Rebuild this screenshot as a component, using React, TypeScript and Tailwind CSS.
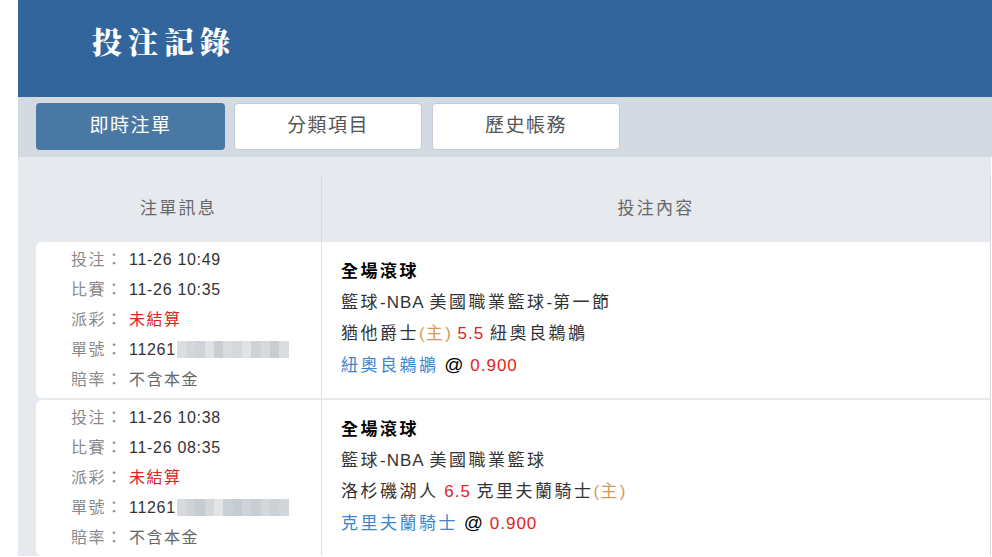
import React from "react";

const FONT = { fontFamily: '"Liberation Sans", "Noto Sans CJK TC", sans-serif' };

function T({ text, cjk }: { text: string; cjk: string }) {
  const parts = text.split(/([\u3000-\u9fff\uff00-\uffef]+)/).filter((p) => p.length > 0);
  return (
    <>
      {parts.map((p, i) =>
        /[\u3000-\u9fff\uff00-\uffef]/.test(p) ? (
          <span key={i} className={cjk}>
            {p}
          </span>
        ) : (
          <span key={i}>{p}</span>
        )
      )}
    </>
  );
}

function Blur({ shades }: { shades: string[] }) {
  return (
    <span className="inline-flex h-[17px] w-[112px] align-middle ml-[1px] -mt-[2px] overflow-hidden">
      {shades.map((c, i) => (
        <span key={i} className="h-full flex-1" style={{ backgroundColor: c }} />
      ))}
    </span>
  );
}

function InfoLine({ label, children }: { label: string; children: React.ReactNode }) {
  return (
    <div className="flex items-center whitespace-nowrap">
      <span className="inline-block w-[58px] text-[#8a8a8a] tracking-[1.5px]">{label}：</span>
      {children}
    </div>
  );
}

function Num({ children, className = "" }: { children: React.ReactNode; className?: string }) {
  return <span className={`tracking-[0.7px] ${className}`}>{children}</span>;
}

type Row = {
  bet: string;
  match: string;
  shades: string[];
  title: string;
  league: string;
  line3: React.ReactNode;
  pick: string;
  odds: string;
};

const CJ = "tracking-[2.5px]";

const rows: Row[] = [
  {
    bet: "11-26 10:49",
    match: "11-26 10:35",
    shades: ["#dcdfe2", "#d3d7db", "#cfd3d7", "#dfe1e4", "#c9ced3", "#d9dcdf", "#d5d9dd", "#e0e2e4", "#cdd2d7", "#d6dadd", "#c8cdd2", "#dadddf"],
    title: "全場滾球",
    league: "籃球-NBA 美國職業籃球-第一節",
    line3: (
      <>
        <span className={CJ}>猶他爵士</span>
        <span className="text-[#d49a5c]">
          (<span className={CJ}>主</span>)
        </span>{" "}
        <span className="text-[#e3221d]">5.5</span> <span className={CJ}>紐奧良鵜鶘</span>
      </>
    ),
    pick: "紐奧良鵜鶘",
    odds: "0.900",
  },
  {
    bet: "11-26 10:38",
    match: "11-26 08:35",
    shades: ["#d7dadd", "#cfd3d7", "#c7ccd1", "#d3d7da", "#e2e4e6", "#cbd0d4", "#c6cbd0", "#d0d4d8", "#c9ced2", "#d4d8db", "#ccd1d5", "#d2d6d9"],
    title: "全場滾球",
    league: "籃球-NBA 美國職業籃球",
    line3: (
      <>
        <span className={CJ}>洛杉磯湖人</span> <span className="text-[#e3221d]">6.5</span>{" "}
        <span className={CJ}>克里夫蘭騎士</span>
        <span className="text-[#d49a5c]">
          (<span className={CJ}>主</span>)
        </span>
      </>
    ),
    pick: "克里夫蘭騎士",
    odds: "0.900",
  },
];

export default function App() {
  return (
    <div className="min-h-[557px] w-[992px] bg-white overflow-hidden" style={FONT}>
      <div className="ml-[18px]">
        {/* Header */}
        <div className="h-[97px] bg-[#31659c] pl-[74px] pt-[20px]">
          <div
            className="text-[30px] leading-[40px] font-black tracking-[6px] text-white"
            style={{ fontFamily: '"Noto Serif CJK TC", "Noto Sans CJK TC", serif' }}
          >
            投注記錄
          </div>
        </div>

        {/* Tabs */}
        <div className="h-[60px] bg-[#d3dae2] pl-[18px] pt-[6px] flex gap-[9px]">
          <div className="h-[47px] w-[189px] rounded-[4px] bg-[#4a78a5] text-white text-[19px] tracking-[1.5px] flex items-center justify-center">
            即時注單
          </div>
          <div className="h-[47px] w-[188px] rounded-[4px] bg-white border border-[#c3ccd6] text-[#555] text-[19px] tracking-[1.5px] flex items-center justify-center">
            分類項目
          </div>
          <div className="h-[47px] w-[188px] rounded-[4px] bg-white border border-[#c3ccd6] text-[#555] text-[19px] tracking-[1.5px] flex items-center justify-center ml-[1px]">
            歷史帳務
          </div>
        </div>

        {/* Table area */}
        <div className="bg-[#e6eaef] pl-[18px] pt-[18px] mr-[1px]">
          <div className="border-r border-[#d6dbe1]">
            {/* Table header */}
            <div className="flex h-[67px] text-[17px] tracking-[2.3px] text-[#666]">
              <div className="w-[285px] flex items-center justify-center">注單訊息</div>
              <div className="flex-1 border-l border-[#d6dbe1] flex items-center justify-center">投注內容</div>
            </div>

            {rows.map((r, i) => (
              <div key={i} className="flex bg-white rounded-l-[6px] mb-[2px]">
                <div className="w-[285px] pl-[35px] py-[3px] text-[16px] leading-[30px] text-[#333]">
                  <InfoLine label="投注">
                    <Num>{r.bet}</Num>
                  </InfoLine>
                  <InfoLine label="比賽">
                    <Num>{r.match}</Num>
                  </InfoLine>
                  <InfoLine label="派彩">
                    <span className="text-[#e3221d] tracking-[1.5px]">未結算</span>
                  </InfoLine>
                  <InfoLine label="單號">
                    <Num>11261</Num>
                    <Blur shades={r.shades} />
                  </InfoLine>
                  <InfoLine label="賠率">
                    <span className="text-[#666] tracking-[1.5px]">不含本金</span>
                  </InfoLine>
                </div>
                <div className="flex-1 border-l border-[#dcdfe3] pl-[19px] pb-[4px] flex flex-col justify-center text-[17px] leading-[31px] tracking-[1px] text-[#333] whitespace-nowrap">
                  <div className="font-bold text-black">
                    <T text={r.title} cjk={CJ} />
                  </div>
                  <div>
                    <T text={r.league} cjk={CJ} />
                  </div>
                  <div>{r.line3}</div>
                  <div>
                    <span className="text-[#3c86cf]">
                      <T text={r.pick} cjk={CJ} />
                    </span>{" "}
                    <span className="text-black text-[19px]">@</span>{" "}
                    <span className="text-[#e3221d]">{r.odds}</span>
                  </div>
                </div>
              </div>
            ))}
          </div>
        </div>
      </div>
    </div>
  );
}
